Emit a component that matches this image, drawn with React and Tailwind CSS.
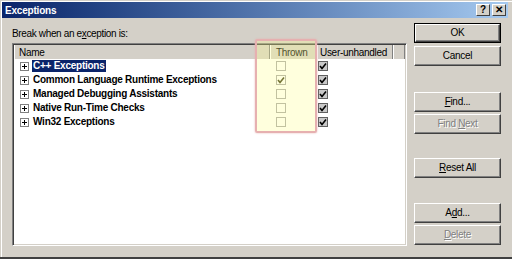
const font = { fontFamily: '"Liberation Sans", Arial, sans-serif' };

function Btn({ children, primary, disabled, className = '' }) {
  return (
    <div
      className={`h-[20px] w-[87px] ${primary ? 'border border-black' : ''} ${className}`}
    >
      <div className="flex h-full w-full items-center justify-center border border-t-white border-l-white border-r-[#404040] border-b-[#404040] shadow-[inset_-1px_-1px_0_#808080] bg-[#d4d0c8]">
        <span
          className={`text-[10px] leading-none tracking-[-0.3px] ${disabled ? 'text-[#808080] [text-shadow:1px_1px_0_#fff]' : 'text-black'}`}
        >
          {children}
        </span>
      </div>
    </div>
  );
}

function Plus() {
  return (
    <div className="relative h-[9px] w-[9px] border border-[#808080] bg-white">
      <div className="absolute left-[1px] top-[3px] h-px w-[5px] bg-black" />
      <div className="absolute left-[3px] top-[1px] h-[5px] w-px bg-black" />
    </div>
  );
}

function Check({ on, gray }) {
  return (
    <div
      className={`relative h-[10px] w-[10px] border ${gray ? 'border-[#606060] bg-[#c8c8c8]' : 'border-[#a8a8a8] bg-white'}`}
    >
      {on && (
        <svg viewBox="0 0 10 10" className="absolute -left-px -top-px h-[10px] w-[10px]">
          <path d="M2 5 L4 7.5 L8 2.5" fill="none" stroke={gray ? '#000' : '#3a3a10'} strokeWidth="1.6" />
        </svg>
      )}
    </div>
  );
}

const rows = [
  { name: 'C++ Exceptions', thrown: false, sel: true },
  { name: 'Common Language Runtime Exceptions', thrown: true },
  { name: 'Managed Debugging Assistants', thrown: false },
  { name: 'Native Run-Time Checks', thrown: false },
  { name: 'Win32 Exceptions', thrown: false },
];

function HeadCell({ w, children, className = '' }) {
  return (
    <div
      className={`flex h-full items-center overflow-hidden whitespace-nowrap border-l border-l-white border-r border-r-[#808080] ${w} ${className}`}
    >
      {children}
    </div>
  );
}

export default function App() {
  return (
    <div
      className="relative flex h-[259px] w-[512px] flex-col overflow-hidden border-b-2 border-b-[#404040] bg-[#d4d0c8] shadow-[inset_1px_1px_0_#d4d0c8,inset_2px_2px_0_#fff]"
      style={font}
    >
      <div className="mx-[2px] mt-[2px] flex h-[16px] w-[506px] items-center justify-between bg-gradient-to-r from-[#0a246a] to-[#a6caf0] pl-[3px] pr-[2px]">
        <span className="text-[10px] font-bold tracking-[-0.2px] text-white">Exceptions</span>
        <div className="flex gap-[2px]">
          {['?', '✕'].map((c) => (
            <div
              key={c}
              className="flex h-[12px] w-[14px] items-center justify-center border border-t-white border-l-white border-r-[#404040] border-b-[#404040] bg-[#d4d0c8] text-[10px] font-bold leading-none text-black"
            >
              {c}
            </div>
          ))}
        </div>
      </div>

      <div className="flex flex-1">
        <div className="flex flex-col pl-[12px]">
          <div className="mt-[9px] text-[10px] leading-[14px] tracking-[-0.35px] text-black">
            Break when an e<span className="underline">x</span>ception is:
          </div>
          <div className="mt-[2px] h-[203px] w-[395px] border border-t-[#808080] border-l-[#808080] border-r-white border-b-white bg-white shadow-[inset_1px_1px_0_#404040,inset_-1px_-1px_0_#d4d0c8]">
            <div className="ml-px mt-px flex h-[14px] bg-[#d4d0c8] text-[10px] tracking-[-0.3px] text-black">
              <HeadCell w="w-[256px]" className="pl-[4px]">Name</HeadCell>
              <HeadCell w="w-[47px]" className="pl-[5px]">Thrown</HeadCell>
              <HeadCell w="w-[76px]" className="pl-[2px]">User-unhandled</HeadCell>
              <HeadCell w="w-[12px]" />
            </div>
            <div className="ml-px flex flex-col">
              {rows.map((r) => (
                <div key={r.name} className="flex h-[14px] items-center">
                  <div className="flex w-[256px] items-center pl-[6px]">
                    <Plus />
                    <span
                      className={`ml-[3px] px-px text-[10px] font-bold leading-[12px] tracking-[-0.25px] ${r.sel ? 'bg-[#0a246a] text-white' : 'text-black'}`}
                    >
                      {r.name}
                    </span>
                  </div>
                  <div className="w-[47px] pl-[6px]">
                    <Check on={r.thrown} />
                  </div>
                  <div className="pl-[1px]">
                    <Check on gray />
                  </div>
                </div>
              ))}
            </div>
          </div>
        </div>

        <div className="ml-[7px] flex flex-col pt-[5px]">
          <Btn primary>OK</Btn>
          <Btn className="mt-[3px]">Cancel</Btn>
          <Btn className="mt-[26px]"><span className="underline">F</span>ind...</Btn>
          <Btn className="mt-[2px]" disabled>Find <span className="underline">N</span>ext</Btn>
          <Btn className="mt-[24px]"><span className="underline">R</span>eset All</Btn>
          <Btn className="mt-[25px]">A<span className="underline">d</span>d...</Btn>
          <Btn className="mt-[2px]" disabled><span className="underline">D</span>elete</Btn>
        </div>
      </div>

      <div className="pointer-events-none absolute left-[255px] top-[39px] h-[94px] w-[62px] rounded-[2px] border-2 border-[#e6b0b0] bg-[#ffff90]/30 shadow-[0_0_2px_#e6b0b0]" />
    </div>
  );
}
